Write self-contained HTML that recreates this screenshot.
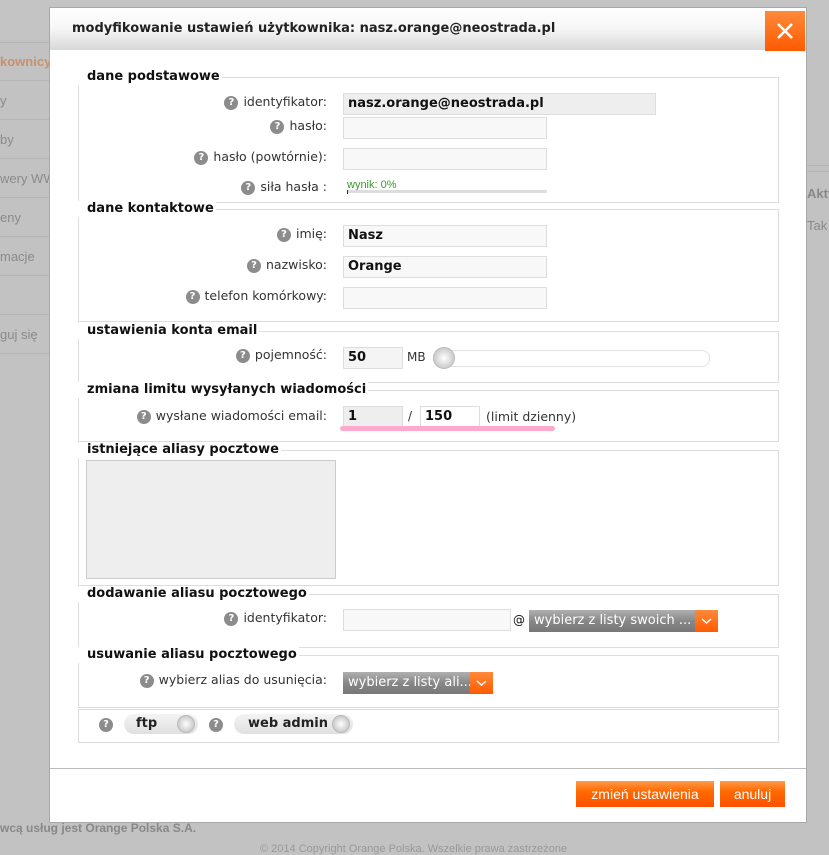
<!DOCTYPE html>
<html><head><meta charset="utf-8">
<style>
*{box-sizing:border-box;margin:0;padding:0}
body{width:829px;height:850px;overflow:hidden;background:#c2c2c2;position:relative;font-family:"DejaVu Sans",Verdana,sans-serif;font-size:12px;color:#333}
.a{position:absolute}
.side{left:0;width:49px;color:#8a8a8a;font-family:"Liberation Sans",sans-serif;font-size:13px;border-bottom:1px solid #b4b4b4;height:39px;line-height:39px;white-space:nowrap;overflow:hidden;text-align:right}
.modal{left:49px;top:7px;width:758px;height:816px;background:#fff;border:1px solid #a8a8a8}
.hdr{left:0;top:0;width:756px;height:42px;background:linear-gradient(#fff 0%,#f6f6f6 50%,#d8d8d8 100%);font-weight:bold;font-size:13px;color:#222;line-height:42px;padding-left:22px}
.close{left:715px;top:3px;width:40px;height:40px;background:linear-gradient(#ff8a3a,#ff5a00)}
.fs{border:1px solid #ddd;left:28px;width:701px}
.lg{background:#fff;font-weight:bold;font-size:13px;color:#111;padding:0 2px 0 9px;left:-1px;top:-9px;line-height:16px}
.lbl{right:0;text-align:right;color:#333;font-size:12.5px;white-space:nowrap}
.q{display:inline-block;width:14px;height:14px;border-radius:7px;background:#8c8c8c;color:#fff;font-size:10px;font-weight:bold;text-align:center;line-height:14px;margin-right:5px;vertical-align:1px}
.in{border:1px solid #ddd;background:#f8f8f8;height:22px;font-weight:bold;font-size:13px;color:#111;padding-left:4px;line-height:20px}
.sel{background:linear-gradient(#b0b0b0,#888 50%,#777);color:#fff;font-size:13px;height:22px;line-height:22px;padding-left:5px;white-space:nowrap}
.arr{background:linear-gradient(#ff8a3a,#ff5a00);height:22px;width:23px}
.tog{height:20px;border-radius:10px;background:linear-gradient(#f4f4f4,#e0e0e0);font-weight:bold;font-size:13px;color:#222;line-height:20px}
.knob{width:18px;height:18px;border-radius:9px;background:radial-gradient(#fff,#ccc 70%,#aaa);border:1px solid #bbb}
.btn{background:linear-gradient(#ff9a4a,#ff6a00 40%,#ff5000);color:#fff;text-align:center;height:26px;line-height:26px;font-family:"Liberation Sans",Tahoma,sans-serif;font-size:14px}
</style></head><body>
<div class="a" style="left:0;top:0;width:829px;height:40px;background:#c4c4c4"></div>
<div class="a side" style="top:42px;color:#c9906c;font-weight:bold;">kownicy</div>
<div class="a" style="left:0;top:42px;width:49px;height:1px;background:#b4b4b4"></div>
<div class="a side" style="top:81px;text-align:left">y</div>
<div class="a side" style="top:120px;text-align:left">by</div>
<div class="a side" style="top:159px;text-align:left">wery WWW</div>
<div class="a side" style="top:198px;text-align:left">eny</div>
<div class="a side" style="top:237px;text-align:left">macje</div>
<div class="a side" style="top:276px;text-align:left"></div>
<div class="a side" style="top:315px;text-align:left">guj się</div>
<div class="a" style="left:807px;top:165px;width:22px;height:90px;border-top:1px solid #b4b4b4;color:#888;font-family:'Liberation Sans',sans-serif;font-size:13px;overflow:hidden;white-space:nowrap">
 <div style="height:6px;border-bottom:1px solid #b4b4b4;margin-bottom:14px"></div>
 <div style="font-weight:bold;">Aktyw</div>
 <div style="margin-top:17px">Tak</div>
</div>
<div class="a" style="left:0;top:821px;font-family:'Liberation Sans',sans-serif;font-weight:bold;font-size:12px;color:#888">wcą usług jest Orange Polska S.A.</div>
<div class="a" style="left:260px;top:843px;font-family:'Liberation Sans',sans-serif;font-size:11px;color:#999">© 2014 Copyright Orange Polska. Wszelkie prawa zastrzeżone</div>

<div class="a modal">
 <div class="a hdr">modyfikowanie ustawień użytkownika: nasz.orange@neostrada.pl</div>
 <div class="a close"><svg width="40" height="40" viewBox="0 0 40 40"><path d="M13 13L27 27M27 13L13 27" stroke="#fff" stroke-width="2.5" fill="none"/></svg></div>

 <div class="a fs" style="top:69px;height:126px">
  <div class="a lg">dane podstawowe</div>
  <div class="a lbl" style="right:451px;top:16px"><span class="q">?</span>identyfikator:</div>
  <div class="a in" style="left:264px;top:15px;width:313px;background:#eee">nasz.orange@neostrada.pl</div>
  <div class="a lbl" style="right:451px;top:40px"><span class="q">?</span>hasło:</div>
  <div class="a in" style="left:264px;top:39px;width:204px"></div>
  <div class="a lbl" style="right:451px;top:71px"><span class="q">?</span>hasło (powtórnie):</div>
  <div class="a in" style="left:264px;top:70px;width:204px"></div>
  <div class="a lbl" style="right:451px;top:101px"><span class="q">?</span>siła hasła :</div>
  <div class="a" style="left:268px;top:101px;font-family:'Liberation Sans',sans-serif;font-size:11px;color:#3a9a2a">wynik: 0%</div>
  <div class="a" style="left:268px;top:112px;width:200px;height:3px;background:#ddd"></div>
  <div class="a" style="left:268px;top:112px;width:1px;height:4px;background:#900"></div>
 </div>

 <div class="a fs" style="top:201px;height:113px">
  <div class="a lg">dane kontaktowe</div>
  <div class="a lbl" style="right:451px;top:16px"><span class="q">?</span>imię:</div>
  <div class="a in" style="left:264px;top:15px;width:204px">Nasz</div>
  <div class="a lbl" style="right:451px;top:47px"><span class="q">?</span>nazwisko:</div>
  <div class="a in" style="left:264px;top:46px;width:204px">Orange</div>
  <div class="a lbl" style="right:451px;top:78px"><span class="q">?</span>telefon komórkowy:</div>
  <div class="a in" style="left:264px;top:77px;width:204px"></div>
 </div>

 <div class="a fs" style="top:323px;height:52px">
  <div class="a lg">ustawienia konta email</div>
  <div class="a lbl" style="right:451px;top:15px"><span class="q">?</span>pojemność:</div>
  <div class="a in" style="left:264px;top:15px;width:60px;background:#f4f4f4">50</div>
  <div class="a" style="left:328px;top:18px;font-size:12px">MB</div>
  <div class="a" style="left:354px;top:18px;width:277px;height:17px;border:1px solid #e2e2e2;border-radius:8px"></div>
  <div class="a knob" style="left:354px;top:15px;width:22px;height:22px;border-radius:11px"></div>
 </div>

 <div class="a fs" style="top:382px;height:52px">
  <div class="a lg">zmiana limitu wysyłanych wiadomości</div>
  <div class="a lbl" style="right:451px;top:17px"><span class="q">?</span>wysłane wiadomości email:</div>
  <div class="a in" style="left:264px;top:15px;width:60px;background:#eee">1</div>
  <div class="a" style="left:329px;top:18px">/</div>
  <div class="a in" style="left:341px;top:15px;width:60px;background:#fff">150</div>
  <div class="a" style="left:407px;top:18px;font-size:12.5px">(limit dzienny)</div>
  <div class="a" style="left:261px;top:35px;width:215px;height:5px;border-radius:3px;background:#ffaacc"></div>
 </div>

 <div class="a fs" style="top:442px;height:136px">
  <div class="a lg">istniejące aliasy pocztowe</div>
  <div class="a" style="left:7px;top:9px;width:250px;height:119px;border:1px solid #ccc;background:#eee"></div>
 </div>

 <div class="a fs" style="top:586px;height:54px">
  <div class="a lg">dodawanie aliasu pocztowego</div>
  <div class="a lbl" style="right:451px;top:15px"><span class="q">?</span>identyfikator:</div>
  <div class="a in" style="left:264px;top:14px;width:168px"></div>
  <div class="a" style="left:434px;top:18px;font-size:12px;color:#111">@</div>
  <div class="a sel" style="left:450px;top:15px;width:166px;overflow:hidden">wybierz z listy swoich ...</div>
  <div class="a arr" style="left:616px;top:15px"><svg width="23" height="22"><path d="M7 9L11.5 13L16 9" stroke="#fff" stroke-width="1.5" fill="none"/></svg></div>
 </div>

 <div class="a fs" style="top:647px;height:53px">
  <div class="a lg">usuwanie aliasu pocztowego</div>
  <div class="a lbl" style="right:451px;top:16px"><span class="q">?</span>wybierz alias do usunięcia:</div>
  <div class="a sel" style="left:264px;top:16px;width:127px;overflow:hidden">wybierz z listy ali...</div>
  <div class="a arr" style="left:391px;top:16px"><svg width="23" height="22"><path d="M7 9L11.5 13L16 9" stroke="#fff" stroke-width="1.5" fill="none"/></svg></div>
 </div>

 <div class="a fs" style="top:701px;height:34px">
  <div class="a" style="left:20px;top:7px"><span class="q">?</span></div>
  <div class="a tog" style="left:45px;top:4px;width:74px;padding-left:12px">ftp<div class="a knob" style="left:53px;top:1px"></div></div>
  <div class="a" style="left:130px;top:7px"><span class="q">?</span></div>
  <div class="a tog" style="left:155px;top:4px;width:119px;padding-left:14px">web admin<div class="a knob" style="left:98px;top:1px"></div></div>
 </div>

 <div class="a" style="left:0;top:760px;width:756px;height:1px;background:#bbb"></div>
 <div class="a btn" style="left:526px;top:773px;width:138px">zmień ustawienia</div>
 <div class="a btn" style="left:670px;top:773px;width:65px">anuluj</div>
</div>
</body></html>
